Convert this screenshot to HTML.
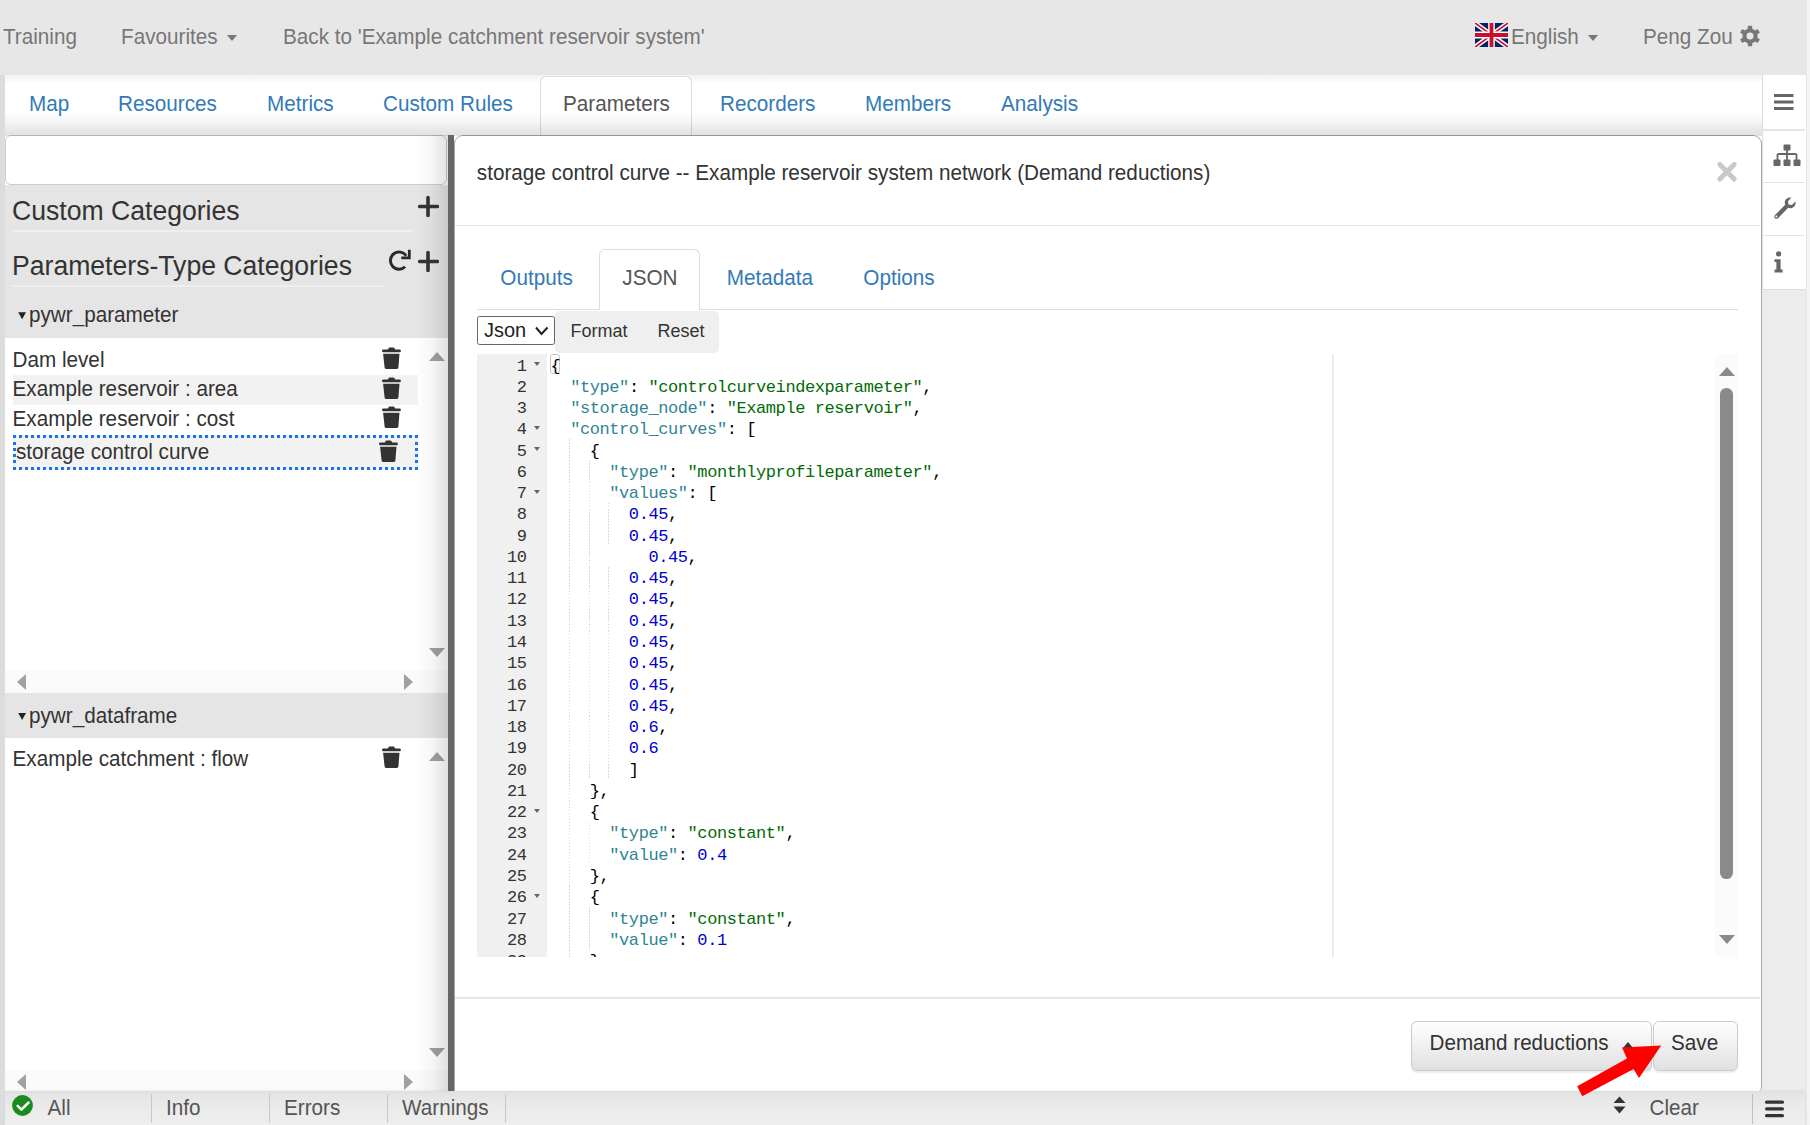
<!DOCTYPE html>
<html><head><meta charset="utf-8">
<style>
html,body{margin:0;padding:0;}
body{width:1810px;height:1125px;position:relative;overflow:hidden;background:#fff;font-family:"Liberation Sans",sans-serif;font-size:20.7px;color:#333;}
.a{position:absolute;}
.t{position:absolute;white-space:nowrap;line-height:1;transform:scaleY(1.05);transform-origin:0 84.65%;}
#topbar{left:0;top:0;width:1806px;height:75px;background:#e7e7e7;}
#rstrip{left:1805px;top:0;width:5px;height:1125px;background:#f4f4f4;border-left:2px solid #e6e6e6;box-sizing:border-box;}
.nav{color:#777;}
.blue{color:#337ab7;}
#lstrip{left:0;top:75px;width:5px;height:1050px;background:#dcdcdc;}
#tabbar{left:5px;top:75px;width:1757px;height:61px;background:linear-gradient(#f2f2f2 0,#fff 9px);}
.code{font-family:"Liberation Mono",monospace;font-size:16.3px;}
.tri{position:absolute;width:0;height:0;}
.gn{position:absolute;left:0;width:49.6px;text-align:right;font-family:"Liberation Mono",monospace;font-size:17px;letter-spacing:-0.42px;line-height:21.27px;height:21.27px;color:#333;}
.fold{position:absolute;left:56.5px;width:0;height:0;border-left:3.8px solid transparent;border-right:3.8px solid transparent;border-top:4.5px solid #666;}
.cl{position:absolute;left:73.6px;white-space:pre;font-family:"Liberation Mono",monospace;font-size:17px;letter-spacing:-0.42px;line-height:21.27px;height:21.27px;color:#000;}
.ig{position:absolute;width:1px;height:21.27px;background:repeating-linear-gradient(#d9d9d9 0,#d9d9d9 1.5px,transparent 1.5px,transparent 3px);}
.k{color:#318495;}.s{color:#036a07;}.n{color:#0000cd;}

.btn{box-sizing:border-box;border:1.5px solid #ccc;border-radius:6px;background:linear-gradient(#fff,#e0e0e0);box-shadow:0 1.5px 1.5px rgba(0,0,0,.075);}
</style></head>
<body>
<div id="topbar" class="a"></div>
<div id="rstrip" class="a"></div>
<div id="lstrip" class="a"></div>
<div id="tabbar" class="a"></div>
<div class="t nav" style="left:3px;top:26.5px;">Training</div>
<div class="t nav" style="left:121px;top:26.5px;">Favourites</div>
<div class="tri" style="left:227.3px;top:35.2px;border-left:5.7px solid transparent;border-right:5.7px solid transparent;border-top:6.4px solid #777;"></div>
<div class="t nav" style="left:283px;top:26.5px;font-size:20.7px;">Back to 'Example catchment reservoir system'</div>
<svg class="a" style="left:1475px;top:23.3px" width="33" height="24" viewBox="0 0 60 40" preserveAspectRatio="none">
<rect width="60" height="40" fill="#012169"/>
<path d="M0,0 L60,40 M60,0 L0,40" stroke="#fff" stroke-width="8"/>
<path d="M0,0 L60,40 M60,0 L0,40" stroke="#C8102E" stroke-width="3"/>
<path d="M30,0 V40 M0,20 H60" stroke="#fff" stroke-width="12"/>
<path d="M30,0 V40 M0,20 H60" stroke="#C8102E" stroke-width="7"/>
</svg>
<div class="t nav" style="left:1511px;top:26.5px;">English</div>
<div class="tri" style="left:1587.7px;top:35px;border-left:5.8px solid transparent;border-right:5.8px solid transparent;border-top:6.5px solid #777;"></div>
<div class="t nav" style="left:1643px;top:26.5px;">Peng Zou</div>
<svg class="a" style="left:1737.5px;top:23.5px" width="24" height="24" viewBox="-12 -12 24 24"><g fill="#777"><rect x="-2.2" y="-10.2" width="4.4" height="5" rx="0.6" transform="rotate(0)"/><rect x="-2.2" y="-10.2" width="4.4" height="5" rx="0.6" transform="rotate(60)"/><rect x="-2.2" y="-10.2" width="4.4" height="5" rx="0.6" transform="rotate(120)"/><rect x="-2.2" y="-10.2" width="4.4" height="5" rx="0.6" transform="rotate(180)"/><rect x="-2.2" y="-10.2" width="4.4" height="5" rx="0.6" transform="rotate(240)"/><rect x="-2.2" y="-10.2" width="4.4" height="5" rx="0.6" transform="rotate(300)"/><circle r="7.6"/></g><circle r="3.5" fill="#e7e7e7"/></svg>

<div class="a" style="left:540px;top:76px;width:152px;height:62px;box-sizing:border-box;background:#fff;border:1.5px solid #ddd;border-bottom:none;border-radius:6px 6px 0 0;"></div>
<div class="a" style="left:5px;top:111px;width:1757px;height:25px;background:linear-gradient(rgba(0,0,0,0) 0,rgba(0,0,0,0.035) 40%,rgba(0,0,0,0.1) 85%,rgba(0,0,0,0.115) 100%);z-index:1;"></div>
<div class="t blue" style="left:29px;top:93.8px;">Map</div>
<div class="t blue" style="left:118px;top:93.8px;">Resources</div>
<div class="t blue" style="left:267px;top:93.8px;">Metrics</div>
<div class="t blue" style="left:383px;top:93.8px;">Custom Rules</div>
<div class="t" style="left:563px;top:93.8px;color:#555;">Parameters</div>
<div class="t blue" style="left:720px;top:93.8px;">Recorders</div>
<div class="t blue" style="left:865px;top:93.8px;">Members</div>
<div class="t blue" style="left:1001px;top:93.8px;">Analysis</div>

<div class="a" style="left:5px;top:135px;width:442px;height:50px;box-sizing:border-box;border:1.5px solid #ccc;border-radius:6px;background:#fff;"></div>
<div class="a" style="left:5px;top:185px;width:443px;height:152.8px;background:#e5e5e5;"></div>
<div class="t" style="left:12px;top:198.3px;font-size:26.6px;">Custom Categories</div>
<div class="a" style="left:13px;top:230px;width:400px;height:1.5px;background:#efefef;"></div>
<div class="t" style="left:12px;top:252.5px;font-size:26.6px;">Parameters-Type Categories</div>
<div class="a" style="left:13px;top:285px;width:371px;height:1.5px;background:#efefef;"></div>
<svg class="a" style="left:417px;top:195px" width="22" height="22" viewBox="0 0 22 22"><path d="M11,2.6V20.4M2.6,11.5H20.4" stroke="#333" stroke-width="3.6" stroke-linecap="round"/></svg>
<svg class="a" style="left:417px;top:250px" width="22" height="22" viewBox="0 0 22 22"><path d="M11,2.6V20.4M2.6,11.5H20.4" stroke="#333" stroke-width="3.6" stroke-linecap="round"/></svg>
<svg class="a" style="left:388px;top:248px" width="24" height="24" viewBox="388 248 24 24"><path d="M405.1,266.7 A8.6,8.6 0 1 1 406.2,255.8" fill="none" stroke="#2a2a2a" stroke-width="2.9"/><path d="M401.3,257.9 H409.3 V249.8" fill="none" stroke="#2a2a2a" stroke-width="2.8"/></svg>
<svg class="a" style="left:17px;top:311px" width="10" height="9" viewBox="17 311 10 9"><path d="M18.2,312.3H26L22.1,319.2Z" fill="#222"/></svg>
<div class="t" style="left:29px;top:304.7px;">pywr_parameter</div>
<div class="a" style="left:13px;top:375px;width:405px;height:29.5px;background:#f2f2f2;"></div>
<div class="t" style="left:12.5px;top:349.8px;">Dam level</div>
<div class="t" style="left:12.5px;top:379.3px;">Example reservoir : area</div>
<div class="t" style="left:12.5px;top:408.7px;">Example reservoir : cost</div>
<div class="a" style="left:13px;top:434.6px;width:405px;height:35px;box-sizing:border-box;border:3px dotted #1a73e8;background:#f2f2f2;"></div>
<div class="t" style="left:16px;top:442px;">storage control curve</div>
<svg class="a" style="left:382px;top:347.2px" width="19" height="22" viewBox="0 0 19 22"><path d="M5.7,2.6 L6.9,0.8 Q7.2,0.5 7.6,0.5 H11.4 Q11.8,0.5 12.1,0.8 L13.3,2.6 H17.6 Q18.9,2.6 18.9,3.9 Q18.9,5.2 17.6,5.2 H1.3 Q0,5.2 0,3.9 Q0,2.6 1.3,2.6 Z" fill="#333"/><path d="M1.1,6.8 H17.5 L16.4,20.6 Q16.3,21.9 15,21.9 H4 Q2.7,21.9 2.6,20.6 Z" fill="#333"/></svg>
<svg class="a" style="left:382px;top:376.7px" width="19" height="22" viewBox="0 0 19 22"><path d="M5.7,2.6 L6.9,0.8 Q7.2,0.5 7.6,0.5 H11.4 Q11.8,0.5 12.1,0.8 L13.3,2.6 H17.6 Q18.9,2.6 18.9,3.9 Q18.9,5.2 17.6,5.2 H1.3 Q0,5.2 0,3.9 Q0,2.6 1.3,2.6 Z" fill="#333"/><path d="M1.1,6.8 H17.5 L16.4,20.6 Q16.3,21.9 15,21.9 H4 Q2.7,21.9 2.6,20.6 Z" fill="#333"/></svg>
<svg class="a" style="left:382px;top:406.2px" width="19" height="22" viewBox="0 0 19 22"><path d="M5.7,2.6 L6.9,0.8 Q7.2,0.5 7.6,0.5 H11.4 Q11.8,0.5 12.1,0.8 L13.3,2.6 H17.6 Q18.9,2.6 18.9,3.9 Q18.9,5.2 17.6,5.2 H1.3 Q0,5.2 0,3.9 Q0,2.6 1.3,2.6 Z" fill="#333"/><path d="M1.1,6.8 H17.5 L16.4,20.6 Q16.3,21.9 15,21.9 H4 Q2.7,21.9 2.6,20.6 Z" fill="#333"/></svg>
<svg class="a" style="left:378.5px;top:439.7px" width="19" height="22" viewBox="0 0 19 22"><path d="M5.7,2.6 L6.9,0.8 Q7.2,0.5 7.6,0.5 H11.4 Q11.8,0.5 12.1,0.8 L13.3,2.6 H17.6 Q18.9,2.6 18.9,3.9 Q18.9,5.2 17.6,5.2 H1.3 Q0,5.2 0,3.9 Q0,2.6 1.3,2.6 Z" fill="#333"/><path d="M1.1,6.8 H17.5 L16.4,20.6 Q16.3,21.9 15,21.9 H4 Q2.7,21.9 2.6,20.6 Z" fill="#333"/></svg>
<svg class="a" style="left:382px;top:746.2px" width="19" height="22" viewBox="0 0 19 22"><path d="M5.7,2.6 L6.9,0.8 Q7.2,0.5 7.6,0.5 H11.4 Q11.8,0.5 12.1,0.8 L13.3,2.6 H17.6 Q18.9,2.6 18.9,3.9 Q18.9,5.2 17.6,5.2 H1.3 Q0,5.2 0,3.9 Q0,2.6 1.3,2.6 Z" fill="#333"/><path d="M1.1,6.8 H17.5 L16.4,20.6 Q16.3,21.9 15,21.9 H4 Q2.7,21.9 2.6,20.6 Z" fill="#333"/></svg>

<div class="tri" style="left:429px;top:352px;border-left:8px solid transparent;border-right:8px solid transparent;border-bottom:9.5px solid #a0a0a0;"></div>
<div class="tri" style="left:429px;top:647.5px;border-left:8px solid transparent;border-right:8px solid transparent;border-top:9.5px solid #a0a0a0;"></div>
<div class="a" style="left:5px;top:670px;width:443px;height:23px;background:#fafafa;"></div>
<div class="tri" style="left:17px;top:673.5px;border-top:8px solid transparent;border-bottom:8px solid transparent;border-right:9.5px solid #a0a0a0;"></div>
<div class="tri" style="left:404px;top:673.5px;border-top:8px solid transparent;border-bottom:8px solid transparent;border-left:9.5px solid #a0a0a0;"></div>
<div class="a" style="left:5px;top:693px;width:443px;height:44.5px;background:#e5e5e5;"></div>
<svg class="a" style="left:17px;top:712px" width="10" height="9" viewBox="17 712 10 9"><path d="M18.2,713.1H26L22.1,720Z" fill="#222"/></svg>
<div class="t" style="left:29px;top:706.2px;">pywr_dataframe</div>
<div class="t" style="left:12.5px;top:749px;">Example catchment : flow</div>
<div class="tri" style="left:429px;top:751.5px;border-left:8px solid transparent;border-right:8px solid transparent;border-bottom:9.5px solid #a0a0a0;"></div>
<div class="tri" style="left:429px;top:1047.5px;border-left:8px solid transparent;border-right:8px solid transparent;border-top:9.5px solid #a0a0a0;"></div>
<div class="a" style="left:5px;top:1070px;width:443px;height:21px;background:#fafafa;"></div>
<div class="tri" style="left:17px;top:1073.5px;border-top:8px solid transparent;border-bottom:8px solid transparent;border-right:9.5px solid #a0a0a0;"></div>
<div class="tri" style="left:404px;top:1073.5px;border-top:8px solid transparent;border-bottom:8px solid transparent;border-left:9.5px solid #a0a0a0;"></div>
<div class="a" style="left:416px;top:135px;width:32px;height:956px;background:linear-gradient(90deg,rgba(0,0,0,0) 0,rgba(0,0,0,0.035) 50%,rgba(0,0,0,0.12) 100%);"></div>
<div class="a" style="left:448.3px;top:135px;width:5.7px;height:956px;background:#666;z-index:5;"></div>

<div class="a" style="left:453.5px;top:135px;width:1308px;height:956.5px;box-sizing:border-box;border:1.5px solid #a8a8a8;border-bottom:none;border-radius:9px 9px 5px 0;background:#fff;"></div>
<div class="a" style="left:455px;top:224.5px;width:1305px;height:1.5px;background:#e5e5e5;"></div>
<div class="t" style="left:476.8px;top:163px;font-size:20.7px;">storage control curve -- Example reservoir system network (Demand reductions)</div>
<svg class="a" style="left:1712px;top:157px" width="30" height="30" viewBox="1712 157 30 30"><path d="M1719.8,164.4L1734.2,179M1734.2,164.4L1719.8,179" stroke="#c9c9c9" stroke-width="5" stroke-linecap="round"/></svg>
<div class="a" style="left:599px;top:248.5px;width:101px;height:61px;box-sizing:border-box;border:1.5px solid #ddd;border-bottom:none;border-radius:6px 6px 0 0;background:#fff;z-index:2;"></div>
<div class="a" style="left:477px;top:308.5px;width:1261px;height:1px;background:#ddd;"></div>
<div class="t blue" style="left:500.3px;top:267.9px;">Outputs</div>
<div class="t" style="left:622.3px;top:267.9px;color:#555;z-index:3;">JSON</div>
<div class="t blue" style="left:726.8px;top:267.9px;">Metadata</div>
<div class="t blue" style="left:863.3px;top:267.9px;">Options</div>
<div class="a" style="left:555px;top:310.5px;width:163.5px;height:42px;background:#efefef;border-radius:5px;"></div>
<div class="a" style="left:476.5px;top:315.5px;width:78px;height:29px;box-sizing:border-box;border:1.5px solid #666;border-radius:2.5px;background:#fff;"></div>
<div class="t" style="left:484px;top:320px;font-size:20px;color:#222;">Json</div>
<svg class="a" style="left:534px;top:325px" width="16" height="12" viewBox="0 0 16 12"><path d="M2,2.5L7.5,9L13.5,2.5" fill="none" stroke="#222" stroke-width="2"/></svg>
<div class="t" style="left:570.5px;top:321.6px;font-size:18px;color:#333;">Format</div>
<div class="t" style="left:657.5px;top:321.6px;font-size:18px;color:#333;">Reset</div>
<div class="a" style="left:477px;top:354px;width:70px;height:603px;background:#f0f0f0;"></div>
<div class="a" style="left:1332px;top:354px;width:1.5px;height:603px;background:#ebebeb;"></div>
<div class="a" style="left:1715px;top:354px;width:23px;height:603px;background:#fbfbfb;"></div>
<div class="a" style="left:1720.2px;top:388px;width:12.8px;height:491px;background:#8a8a8a;border-radius:6.4px;"></div>
<div class="tri" style="left:1719px;top:367px;border-left:8px solid transparent;border-right:8px solid transparent;border-bottom:9px solid #8a8a8a;"></div>
<div class="tri" style="left:1719px;top:935px;border-left:8px solid transparent;border-right:8px solid transparent;border-top:9px solid #8a8a8a;"></div>
<div class="a" style="left:477px;top:354px;width:1238px;height:603px;overflow:hidden;">
<div class="ig" style="left:92.06px;top:85.08px"></div>
<div class="ig" style="left:92.06px;top:106.35px"></div>
<div class="ig" style="left:111.62px;top:106.35px"></div>
<div class="ig" style="left:92.06px;top:127.62px"></div>
<div class="ig" style="left:111.62px;top:127.62px"></div>
<div class="ig" style="left:92.06px;top:148.89px"></div>
<div class="ig" style="left:111.62px;top:148.89px"></div>
<div class="ig" style="left:131.18px;top:148.89px"></div>
<div class="ig" style="left:92.06px;top:170.16px"></div>
<div class="ig" style="left:111.62px;top:170.16px"></div>
<div class="ig" style="left:131.18px;top:170.16px"></div>
<div class="ig" style="left:92.06px;top:191.43px"></div>
<div class="ig" style="left:111.62px;top:191.43px"></div>
<div class="ig" style="left:92.06px;top:212.70px"></div>
<div class="ig" style="left:111.62px;top:212.70px"></div>
<div class="ig" style="left:131.18px;top:212.70px"></div>
<div class="ig" style="left:92.06px;top:233.97px"></div>
<div class="ig" style="left:111.62px;top:233.97px"></div>
<div class="ig" style="left:131.18px;top:233.97px"></div>
<div class="ig" style="left:92.06px;top:255.24px"></div>
<div class="ig" style="left:111.62px;top:255.24px"></div>
<div class="ig" style="left:131.18px;top:255.24px"></div>
<div class="ig" style="left:92.06px;top:276.51px"></div>
<div class="ig" style="left:111.62px;top:276.51px"></div>
<div class="ig" style="left:131.18px;top:276.51px"></div>
<div class="ig" style="left:92.06px;top:297.78px"></div>
<div class="ig" style="left:111.62px;top:297.78px"></div>
<div class="ig" style="left:131.18px;top:297.78px"></div>
<div class="ig" style="left:92.06px;top:319.05px"></div>
<div class="ig" style="left:111.62px;top:319.05px"></div>
<div class="ig" style="left:131.18px;top:319.05px"></div>
<div class="ig" style="left:92.06px;top:340.32px"></div>
<div class="ig" style="left:111.62px;top:340.32px"></div>
<div class="ig" style="left:131.18px;top:340.32px"></div>
<div class="ig" style="left:92.06px;top:361.59px"></div>
<div class="ig" style="left:111.62px;top:361.59px"></div>
<div class="ig" style="left:131.18px;top:361.59px"></div>
<div class="ig" style="left:92.06px;top:382.86px"></div>
<div class="ig" style="left:111.62px;top:382.86px"></div>
<div class="ig" style="left:131.18px;top:382.86px"></div>
<div class="ig" style="left:92.06px;top:404.13px"></div>
<div class="ig" style="left:111.62px;top:404.13px"></div>
<div class="ig" style="left:131.18px;top:404.13px"></div>
<div class="ig" style="left:92.06px;top:425.40px"></div>
<div class="ig" style="left:92.06px;top:446.67px"></div>
<div class="ig" style="left:92.06px;top:467.94px"></div>
<div class="ig" style="left:111.62px;top:467.94px"></div>
<div class="ig" style="left:92.06px;top:489.21px"></div>
<div class="ig" style="left:111.62px;top:489.21px"></div>
<div class="ig" style="left:92.06px;top:510.48px"></div>
<div class="ig" style="left:92.06px;top:531.75px"></div>
<div class="ig" style="left:92.06px;top:553.02px"></div>
<div class="ig" style="left:111.62px;top:553.02px"></div>
<div class="ig" style="left:92.06px;top:574.29px"></div>
<div class="ig" style="left:111.62px;top:574.29px"></div>
<div class="ig" style="left:92.06px;top:595.56px"></div>
<div class="a" style="left:73.3px;top:-0.5px;width:9.4px;height:20.3px;box-sizing:border-box;border:1px solid #c8c8c8;border-radius:3px;"></div>
<div class="gn" style="top:1.50px">1</div>
<div class="fold" style="top:8.00px"></div>
<div class="cl" style="top:1.50px">{</div>
<div class="gn" style="top:22.77px">2</div>
<div class="cl" style="top:22.77px">  <span class="k">"type"</span>: <span class="s">"controlcurveindexparameter"</span>,</div>
<div class="gn" style="top:44.04px">3</div>
<div class="cl" style="top:44.04px">  <span class="k">"storage_node"</span>: <span class="s">"Example reservoir"</span>,</div>
<div class="gn" style="top:65.31px">4</div>
<div class="fold" style="top:71.81px"></div>
<div class="cl" style="top:65.31px">  <span class="k">"control_curves"</span>: [</div>
<div class="gn" style="top:86.58px">5</div>
<div class="fold" style="top:93.08px"></div>
<div class="cl" style="top:86.58px">    {</div>
<div class="gn" style="top:107.85px">6</div>
<div class="cl" style="top:107.85px">      <span class="k">"type"</span>: <span class="s">"monthlyprofileparameter"</span>,</div>
<div class="gn" style="top:129.12px">7</div>
<div class="fold" style="top:135.62px"></div>
<div class="cl" style="top:129.12px">      <span class="k">"values"</span>: [</div>
<div class="gn" style="top:150.39px">8</div>
<div class="cl" style="top:150.39px">        <span class="n">0.45</span>,</div>
<div class="gn" style="top:171.66px">9</div>
<div class="cl" style="top:171.66px">        <span class="n">0.45</span>,</div>
<div class="gn" style="top:192.93px">10</div>
<div class="cl" style="top:192.93px">          <span class="n">0.45</span>,</div>
<div class="gn" style="top:214.20px">11</div>
<div class="cl" style="top:214.20px">        <span class="n">0.45</span>,</div>
<div class="gn" style="top:235.47px">12</div>
<div class="cl" style="top:235.47px">        <span class="n">0.45</span>,</div>
<div class="gn" style="top:256.74px">13</div>
<div class="cl" style="top:256.74px">        <span class="n">0.45</span>,</div>
<div class="gn" style="top:278.01px">14</div>
<div class="cl" style="top:278.01px">        <span class="n">0.45</span>,</div>
<div class="gn" style="top:299.28px">15</div>
<div class="cl" style="top:299.28px">        <span class="n">0.45</span>,</div>
<div class="gn" style="top:320.55px">16</div>
<div class="cl" style="top:320.55px">        <span class="n">0.45</span>,</div>
<div class="gn" style="top:341.82px">17</div>
<div class="cl" style="top:341.82px">        <span class="n">0.45</span>,</div>
<div class="gn" style="top:363.09px">18</div>
<div class="cl" style="top:363.09px">        <span class="n">0.6</span>,</div>
<div class="gn" style="top:384.36px">19</div>
<div class="cl" style="top:384.36px">        <span class="n">0.6</span></div>
<div class="gn" style="top:405.63px">20</div>
<div class="cl" style="top:405.63px">        ]</div>
<div class="gn" style="top:426.90px">21</div>
<div class="cl" style="top:426.90px">    },</div>
<div class="gn" style="top:448.17px">22</div>
<div class="fold" style="top:454.67px"></div>
<div class="cl" style="top:448.17px">    {</div>
<div class="gn" style="top:469.44px">23</div>
<div class="cl" style="top:469.44px">      <span class="k">"type"</span>: <span class="s">"constant"</span>,</div>
<div class="gn" style="top:490.71px">24</div>
<div class="cl" style="top:490.71px">      <span class="k">"value"</span>: <span class="n">0.4</span></div>
<div class="gn" style="top:511.98px">25</div>
<div class="cl" style="top:511.98px">    },</div>
<div class="gn" style="top:533.25px">26</div>
<div class="fold" style="top:539.75px"></div>
<div class="cl" style="top:533.25px">    {</div>
<div class="gn" style="top:554.52px">27</div>
<div class="cl" style="top:554.52px">      <span class="k">"type"</span>: <span class="s">"constant"</span>,</div>
<div class="gn" style="top:575.79px">28</div>
<div class="cl" style="top:575.79px">      <span class="k">"value"</span>: <span class="n">0.1</span></div>
<div class="gn" style="top:597.06px">29</div>
<div class="cl" style="top:597.06px">    }</div>
</div>
<div class="a" style="left:455px;top:997px;width:1305px;height:1.5px;background:#e5e5e5;"></div>
<div class="a btn" style="left:1410.5px;top:1021px;width:241.5px;height:49.5px;"></div>
<div class="a btn" style="left:1653px;top:1021px;width:84.5px;height:49.5px;"></div>
<div class="t" style="left:1429.5px;top:1032.8px;color:#333;font-size:20.65px;">Demand reductions</div>
<div class="tri" style="left:1622.5px;top:1041.5px;border-left:5px solid transparent;border-right:5px solid transparent;border-bottom:6px solid #333;"></div>
<div class="t" style="left:1671px;top:1032.8px;color:#333;">Save</div>
<svg class="a" style="left:1569.2px;top:1035px;z-index:10" width="100" height="70" viewBox="1570 1035 100 70"><path d="M1578.2,1086.2 L1628,1058.6 L1623,1047.6 L1662.2,1045.6 L1640,1078 L1634.6,1069.1 L1583.2,1096.2 Z" fill="#ff0000"/></svg>

<div class="a" style="left:1761.5px;top:75px;width:44px;height:1016px;background:#ececec;"></div>
<div class="a" style="left:1761.5px;top:75px;width:44px;height:214px;background:#fff;border-left:1.5px solid #ddd;box-sizing:border-box;"></div>
<div class="a" style="left:1762px;top:129px;width:43px;height:1.5px;background:#e3e3e3;"></div>
<div class="a" style="left:1762px;top:181.8px;width:43px;height:1.5px;background:#e3e3e3;"></div>
<div class="a" style="left:1762px;top:234.9px;width:43px;height:1.5px;background:#e3e3e3;"></div>
<div class="a" style="left:1762px;top:288.5px;width:43px;height:1.5px;background:#dcdcdc;"></div>
<svg class="a" style="left:1773.5px;top:93px" width="20" height="18" viewBox="0 0 20 18"><rect x="0" y="1" width="19.5" height="3" fill="#666"/><rect x="0" y="7.5" width="19.5" height="3" fill="#666"/><rect x="0" y="14" width="19.5" height="3" fill="#666"/></svg>
<svg class="a" style="left:1773px;top:143.5px" width="28" height="23" viewBox="0 0 28 23"><rect x="10.5" y="0.5" width="7" height="6" rx="1" fill="#666"/><path d="M14,6V10M4.5,10H23.5M4.5,10V16M14,10V16M23.5,10V16" stroke="#666" stroke-width="1.8" fill="none"/><rect x="0.5" y="15.5" width="7" height="6.5" rx="1" fill="#666"/><rect x="10.5" y="15.5" width="7" height="6.5" rx="1" fill="#666"/><rect x="20.5" y="15.5" width="7" height="6.5" rx="1" fill="#666"/></svg>
<svg class="a" style="left:1773px;top:196px" width="24" height="24" viewBox="0 0 24 24"><path d="M22.5,5.5 L18.8,9 L15.5,8.5 L15,5.2 L18.5,1.5 Q13.5,0.8 12,5 Q11.5,7 12.2,8.8 L1.8,19.2 Q0.5,20.8 2,22.2 Q3.5,23.5 5,22.2 L15.2,11.8 Q17,12.5 19,12 Q23.2,10.5 22.5,5.5 Z" fill="#666"/><circle cx="3.4" cy="20.6" r="1" fill="#fff"/></svg>
<svg class="a" style="left:1773.5px;top:250.5px" width="10" height="22" viewBox="0 0 10 22"><circle cx="4.6" cy="2.9" r="2.6" fill="#666"/><path d="M0.5,8.2H6.6V18.6H8.6V21.5H0.5V18.6H2.4V11H0.5Z" fill="#666"/></svg>

<div class="a" style="left:5px;top:1091px;width:1800px;height:34px;background:linear-gradient(#dcdcdc 0,#e3e3e3 2px,#e8e8e8 10px,#ececec 22px,#eeeeee 34px);box-shadow:0 -1px 2px rgba(0,0,0,0.04);"></div>
<svg class="a" style="left:12px;top:1094.7px" width="21" height="21" viewBox="0 0 21 21"><circle cx="10.5" cy="10.5" r="10.4" fill="#1a8a1c"/><path d="M5.6,10.9L9.4,14.7L16.6,7.5" fill="none" stroke="#fff" stroke-width="2.5" stroke-linecap="round" stroke-linejoin="round"/></svg>
<div class="t" style="left:47.5px;top:1098.4px;color:#555;">All</div>
<div class="a" style="left:150.5px;top:1094px;width:1.2px;height:29px;background:#c8c8c8;"></div>
<div class="t" style="left:166px;top:1098.4px;color:#555;">Info</div>
<div class="a" style="left:268.5px;top:1094px;width:1.2px;height:29px;background:#c8c8c8;"></div>
<div class="t" style="left:284px;top:1098.4px;color:#555;">Errors</div>
<div class="a" style="left:387px;top:1094px;width:1.2px;height:29px;background:#c8c8c8;"></div>
<div class="t" style="left:402px;top:1098.4px;color:#555;">Warnings</div>
<div class="a" style="left:505px;top:1094px;width:1.2px;height:29px;background:#c8c8c8;"></div>
<svg class="a" style="left:1613px;top:1096px" width="13" height="18" viewBox="0 0 13 18"><path d="M6.5,0.5L12.5,7H0.5Z M0.5,10.5H12.5L6.5,17.5Z" fill="#333"/></svg>
<div class="t" style="left:1649.5px;top:1098.4px;color:#555;">Clear</div>
<div class="a" style="left:1751.8px;top:1094px;width:1.2px;height:30px;background:#c0c0c0;"></div>
<svg class="a" style="left:1765px;top:1100px" width="20" height="18" viewBox="0 0 20 18"><rect x="0" y="0.5" width="19" height="3.2" rx="1.5" fill="#333"/><rect x="0" y="7.3" width="19" height="3.2" rx="1.5" fill="#333"/><rect x="0" y="14.1" width="19" height="3.2" rx="1.5" fill="#333"/></svg>

</body></html>
